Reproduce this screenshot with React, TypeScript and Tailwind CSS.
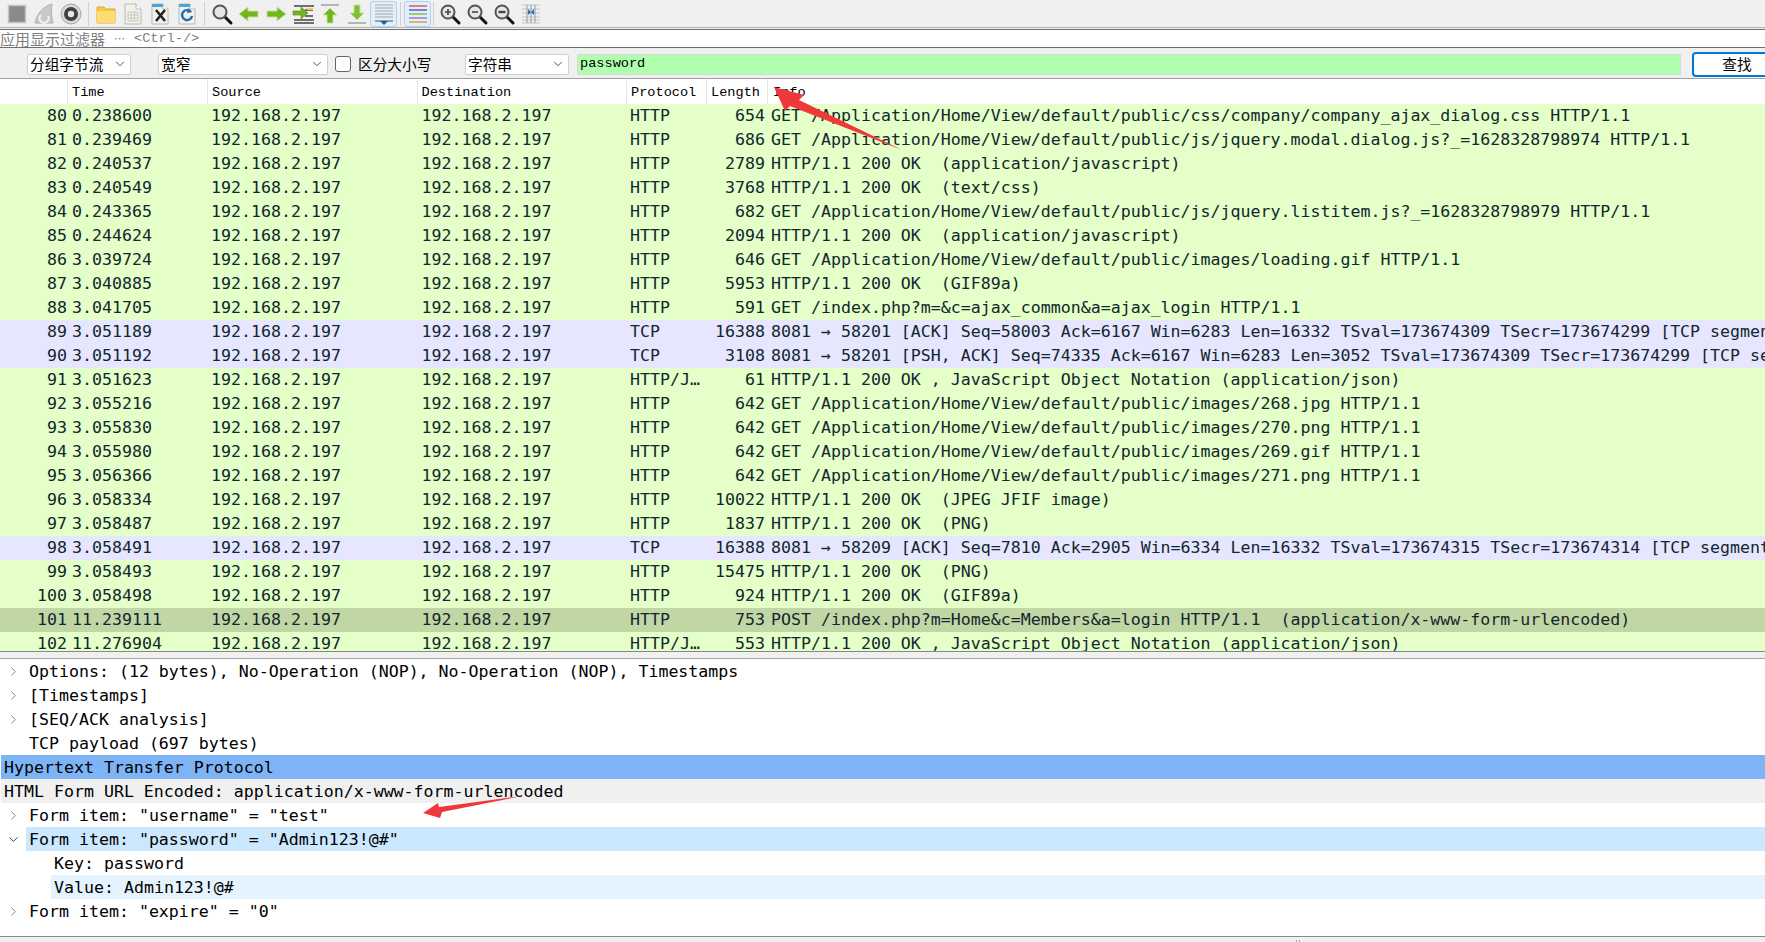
import React from "react";
import { ChevronDown, ChevronRight } from "lucide-react";

const HOME = "/Application/Home/View/default/public";

// no, time, protocol, length, info, colour
const packets: [number, string, string, string, string, string][] = [
  [80, "0.238600", "HTTP", "654", `GET ${HOME}/css/company/company_ajax_dialog.css HTTP/1.1`, "http"],
  [81, "0.239469", "HTTP", "686", `GET ${HOME}/js/jquery.modal.dialog.js?_=1628328798974 HTTP/1.1`, "http"],
  [82, "0.240537", "HTTP", "2789", "HTTP/1.1 200 OK  (application/javascript)", "http"],
  [83, "0.240549", "HTTP", "3768", "HTTP/1.1 200 OK  (text/css)", "http"],
  [84, "0.243365", "HTTP", "682", `GET ${HOME}/js/jquery.listitem.js?_=1628328798979 HTTP/1.1`, "http"],
  [85, "0.244624", "HTTP", "2094", "HTTP/1.1 200 OK  (application/javascript)", "http"],
  [86, "3.039724", "HTTP", "646", `GET ${HOME}/images/loading.gif HTTP/1.1`, "http"],
  [87, "3.040885", "HTTP", "5953", "HTTP/1.1 200 OK  (GIF89a)", "http"],
  [88, "3.041705", "HTTP", "591", "GET /index.php?m=&c=ajax_common&a=ajax_login HTTP/1.1", "http"],
  [89, "3.051189", "TCP", "16388", "8081 → 58201 [ACK] Seq=58003 Ack=6167 Win=6283 Len=16332 TSval=173674309 TSecr=173674299 [TCP segment of a reassembled PDU]", "tcp"],
  [90, "3.051192", "TCP", "3108", "8081 → 58201 [PSH, ACK] Seq=74335 Ack=6167 Win=6283 Len=3052 TSval=173674309 TSecr=173674299 [TCP segment of a reassembled PDU]", "tcp"],
  [91, "3.051623", "HTTP/J…", "61", "HTTP/1.1 200 OK , JavaScript Object Notation (application/json)", "http"],
  [92, "3.055216", "HTTP", "642", `GET ${HOME}/images/268.jpg HTTP/1.1`, "http"],
  [93, "3.055830", "HTTP", "642", `GET ${HOME}/images/270.png HTTP/1.1`, "http"],
  [94, "3.055980", "HTTP", "642", `GET ${HOME}/images/269.gif HTTP/1.1`, "http"],
  [95, "3.056366", "HTTP", "642", `GET ${HOME}/images/271.png HTTP/1.1`, "http"],
  [96, "3.058334", "HTTP", "10022", "HTTP/1.1 200 OK  (JPEG JFIF image)", "http"],
  [97, "3.058487", "HTTP", "1837", "HTTP/1.1 200 OK  (PNG)", "http"],
  [98, "3.058491", "TCP", "16388", "8081 → 58209 [ACK] Seq=7810 Ack=2905 Win=6334 Len=16332 TSval=173674315 TSecr=173674314 [TCP segment of a reassembled PDU]", "tcp"],
  [99, "3.058493", "HTTP", "15475", "HTTP/1.1 200 OK  (PNG)", "http"],
  [100, "3.058498", "HTTP", "924", "HTTP/1.1 200 OK  (GIF89a)", "http"],
  [101, "11.239111", "HTTP", "753", "POST /index.php?m=Home&c=Members&a=login HTTP/1.1  (application/x-www-form-urlencoded)", "sel"],
  [102, "11.276904", "HTTP/J…", "553", "HTTP/1.1 200 OK , JavaScript Object Notation (application/json)", "http"],
];

const mono = "font-['DejaVu_Sans_Mono',monospace]";
const small = "font-['Liberation_Mono',monospace]";
const cjk = "font-['Noto_Sans_CJK_SC','Noto_Sans',sans-serif]";

function Slot({ children, on }: { children: React.ReactNode; on?: boolean }) {
  return (
    <div
      className={`w-[27px] h-[26px] flex items-center justify-center shrink-0 rounded-[3px] ${
        on ? "bg-[#e2eefa] border border-[#a8d4f8]" : ""
      }`}
    >
      <svg width="24" height="24" viewBox="0 0 24 24">
        {children}
      </svg>
    </div>
  );
}

function Sep({ w = "w-[8px]" }: { w?: string }) {
  return (
    <div className={`${w} h-[24px] flex justify-center shrink-0`}>
      <div className="w-px h-full bg-[#d0d0d0]" />
    </div>
  );
}

function Page({ children }: { children?: React.ReactNode }) {
  return (
    <>
      <path d="M4 2h11l5 5v15H4z" fill="#f4f1e6" stroke="#b8b8b8" />
      <path d="M15 2v5h5" fill="#fff" stroke="#b8b8b8" />
      {children}
    </>
  );
}

function Lens({ children }: { children?: React.ReactNode }) {
  return (
    <>
      <path d="M15 15l6 6" stroke="#111" strokeWidth="3" strokeLinecap="round" />
      <circle cx="10" cy="10" r="6.5" fill="#e6e6e6" stroke="#555" strokeWidth="2" />
      {children}
    </>
  );
}

function Toolbar() {
  return (
    <div className="h-[27px] pl-[3px] flex items-center bg-[#f0f0f0] border-b border-[#b4b4b4] box-content">
      <Slot>
        <rect x="3.5" y="3.5" width="17" height="17" fill="#8a8a8a" stroke="#c4c4c4" strokeWidth="1.5" />
      </Slot>
      <Slot>
        <path d="M3 21C5 12 10 5 20 2c-1 6-1 13 1 19z" fill="#c8c8c8" stroke="#b0b0b0" />
        <path d="M9 13a4.5 4.5 0 1 0 7 1" fill="none" stroke="#f4f4f4" strokeWidth="2" />
      </Slot>
      <Slot>
        <circle cx="12" cy="12" r="10" fill="#d8d8d8" stroke="#a8a8a8" />
        <circle cx="12" cy="12" r="7" fill="#404040" />
        <circle cx="12" cy="12" r="3.2" fill="#e6e6e6" />
      </Slot>
      <Sep />
      <Slot>
        <path d="M3 5h7l2 2h9v14H3z" fill="#fbc73d" stroke="#e0a92a" />
        <path d="M3 9h18v12H3z" fill="#fddc74" />
      </Slot>
      <Slot>
        <Page>
          <path d="M7 10h10v9H7zM10.3 10v9M13.6 10v9M7 13h10M7 16h10" fill="none" stroke="#c8c8c8" />
        </Page>
      </Slot>
      <Slot>
        <Page>
          <path d="M4 2h11v3H4z" fill="#4da3dc" />
          <path d="M8 8l9 11M17 8L8 19" stroke="#222" strokeWidth="2.6" />
        </Page>
      </Slot>
      <Slot>
        <Page>
          <path d="M4 2h11v3H4z" fill="#4da3dc" />
          <path d="M16 10a5 5 0 1 0 1 4" fill="none" stroke="#1d6fb8" strokeWidth="2.4" />
          <path d="M13 6l4 4-5 1z" fill="#1d6fb8" />
        </Page>
      </Slot>
      <Sep />
      <Slot>
        <Lens />
      </Slot>
      <Slot>
        <path d="M2 12l9-7v4h10v6H11v4z" fill="#72b51d" stroke="#c6e0a0" />
      </Slot>
      <Slot>
        <path d="M22 12l-9-7v4H3v6h10v4z" fill="#72b51d" stroke="#c6e0a0" />
      </Slot>
      <Slot>
        <path d="M3 4h20M14 8h8M3 18h20M3 21h20M14 14h8" stroke="#444" strokeWidth="1.3" />
        <path d="M16 6h6v2h-6z" fill="#f0d040" />
        <path d="M2 9h8V5l7 6-7 6v-4H2z" fill="#72b51d" stroke="#4c8a10" strokeWidth=".6" />
      </Slot>
      <Slot>
        <path d="M3 3h18" stroke="#a0a0a0" strokeWidth="1.5" />
        <path d="M12 6l7 7h-4v8H9v-8H5z" fill="#72b51d" stroke="#c6e0a0" />
      </Slot>
      <Slot>
        <path d="M3 21h18" stroke="#a0a0a0" strokeWidth="1.5" />
        <path d="M12 18l7-7h-4V3H9v8H5z" fill="#82bf30" stroke="#c6e0a0" />
      </Slot>
      <Slot on>
        <path d="M3 3h18M3 6h18M3 9h18M3 12h18M3 15h18" stroke="#a8a8a8" strokeWidth="1" />
        <path d="M3 19h18" stroke="#555" strokeWidth="1" />
        <path d="M8 19h8l-4 4z" fill="#1d5fa8" />
      </Slot>
      <Sep w="w-[7px]" />
      <Slot on>
        <path d="M3 4h18" stroke="#e05050" strokeWidth="1.4" />
        <path d="M3 8h18" stroke="#5050d0" strokeWidth="1.4" />
        <path d="M3 12h18" stroke="#80b840" strokeWidth="1.4" />
        <path d="M3 16h18" stroke="#a070c0" strokeWidth="1.4" />
        <path d="M3 20h18" stroke="#d0a030" strokeWidth="1.4" />
      </Slot>
      <Sep w="w-[5px]" />
      <Slot>
        <Lens>
          <path d="M7 10h6M10 7v6" stroke="#444" strokeWidth="1.6" />
        </Lens>
      </Slot>
      <Slot>
        <Lens>
          <path d="M7 10h6" stroke="#444" strokeWidth="1.6" />
        </Lens>
      </Slot>
      <Slot>
        <Lens>
          <path d="M6.5 10h7" stroke="#444" strokeWidth="2.4" />
        </Lens>
      </Slot>
      <Slot>
        <path d="M3 3h18M3 21h18M3 7h18M3 11h18M3 15h18M3 18h18" stroke="#c4c4c4" />
        <path d="M8 3v18M16 3v18M12 3v18" stroke="#9a9a9a" />
        <path d="M9 7l3 3-3 3zM15 7l-3 3 3 3z" fill="#1d6fb8" />
      </Slot>
    </div>
  );
}

function FilterBar() {
  return (
    <div className={`mt-[1px] h-[17px] bg-white border-y border-[#6e6e6e] flex items-center box-content text-[#808080] ${cjk}`}>
      <span className="text-[15px] leading-none">应用显示过滤器</span>
      <span className="ml-[9px] text-[11px] leading-none">…</span>
      <span className={`ml-[9px] text-[13.6px] leading-none ${small}`}>{"<Ctrl-/>"}</span>
    </div>
  );
}

function Select({ label, className }: { label: string; className: string }) {
  return (
    <div className={`h-[21px] bg-white border border-[#d0d0d0] rounded-[2px] flex items-center justify-between pl-[2px] pr-[3px] shrink-0 ${className}`}>
      <span className={`text-[14.67px] leading-none text-black ${cjk}`}>{label}</span>
      <ChevronDown size={14} strokeWidth={1.4} className="text-[#333]" />
    </div>
  );
}

function FindBar() {
  return (
    <div className="h-[28px] pt-[2px] pl-[27px] bg-[#f0f0f0] border-b border-[#a0a0a0] flex items-center overflow-hidden box-content">
      <Select label="分组字节流" className="w-[104px]" />
      <Select label="宽窄" className="ml-[27px] w-[170px]" />
      <div className="ml-[7px] w-[16px] h-[16px] bg-white border border-[#666] rounded-[3px] shrink-0" />
      <span className={`ml-[7px] w-[107px] text-[14.67px] leading-none text-black shrink-0 ${cjk}`}>区分大小写</span>
      <Select label="字符串" className="w-[104px]" />
      <div className="ml-[8px] w-[1104px] h-[21px] bg-[#afffaf] border border-[#d8d8d8] flex items-center pl-[2px] shrink-0">
        <span className={`text-[13.6px] leading-none text-black ${small}`}>password</span>
      </div>
      <div className="ml-[11px] w-[90px] h-[25px] bg-white border-2 border-[#0078d7] rounded-[4px] flex items-center justify-center shrink-0">
        <span className={`text-[14.67px] leading-none text-black ${cjk}`}>查找</span>
      </div>
    </div>
  );
}

const cols = "grid grid-cols-[68px_140px_209.5px_209.5px_80px_61px_1fr]";

function HeaderCell({ label, className = "" }: { label: string; className?: string }) {
  return (
    <div className={`h-full border-r border-[#e5e5e5] flex items-center pt-[4px] pl-[4px] text-[13.6px] text-black ${small} ${className}`}>
      {label}
    </div>
  );
}

function PacketList() {
  return (
    <div className="h-[572px] overflow-hidden border-b border-[#888] box-content">
      <div className={`h-[25px] bg-white ${cols}`}>
        <HeaderCell label="" />
        <HeaderCell label="Time" />
        <HeaderCell label="Source" />
        <HeaderCell label="Destination" />
        <HeaderCell label="Protocol" />
        <HeaderCell label="Length" />
        <div className={`h-full flex items-center pt-[4px] pl-[5px] text-[13.6px] text-black ${small}`}>Info</div>
      </div>
      {packets.map(([no, time, proto, len, info, kind]) => (
        <div
          key={no}
          className={`h-[24px] ${cols} items-center whitespace-pre text-[16.6px] leading-[24px] text-[#12272e] ${mono} ${
            kind === "tcp" ? "bg-[#e7e6ff]" : kind === "sel" ? "bg-[#c1d6a5]" : "bg-[#e4ffc7]"
          }`}
        >
          <div className="text-right pr-[1px]">{no}</div>
          <div className="pl-[4px]">{time}</div>
          <div className="pl-[3px]">192.168.2.197</div>
          <div className="pl-[4px]">192.168.2.197</div>
          <div className="pl-[3px]">{proto}</div>
          <div className="text-right pr-[3px]">{len}</div>
          <div className="pl-[3px] overflow-hidden">{info}</div>
        </div>
      ))}
    </div>
  );
}

function Tree({ text, open, leaf }: { text: string; open?: boolean; leaf?: boolean }) {
  return (
    <div className={`h-[24px] flex items-center whitespace-pre text-[16.6px] ${mono} text-black`}>
      <div className="w-[26px] h-full pl-[6px] flex items-center shrink-0">
        {leaf ? null : open ? (
          <ChevronDown size={15} strokeWidth={1.5} className="text-[#333]" />
        ) : (
          <ChevronRight size={15} strokeWidth={1.5} className="text-[#808080]" />
        )}
      </div>
      <div className={`flex-1 h-full pt-[2px] pl-[3px] flex items-center ${open ? "bg-[#cce8ff]" : ""}`}>{text}</div>
    </div>
  );
}

function Details() {
  return (
    <div className="mt-[6px] h-[277px] bg-white border-t border-[#a0a0a0] border-b border-b-[#888] overflow-hidden box-content">
      <Tree text="Options: (12 bytes), No-Operation (NOP), No-Operation (NOP), Timestamps" />
      <Tree text="[Timestamps]" />
      <Tree text="[SEQ/ACK analysis]" />
      <Tree text="TCP payload (697 bytes)" leaf />
      <div className={`ml-[1px] h-[24px] pt-[2px] pl-[3px] flex items-center bg-[#7eb4f5] text-[16.6px] text-black ${mono}`}>
        Hypertext Transfer Protocol
      </div>
      <div className={`ml-[1px] h-[24px] pt-[2px] pl-[3px] flex items-center bg-[#f0f0f0] text-[16.6px] text-black ${mono}`}>
        HTML Form URL Encoded: application/x-www-form-urlencoded
      </div>
      <Tree text={'Form item: "username" = "test"'} />
      <Tree text={'Form item: "password" = "Admin123!@#"'} open />
      <div className={`ml-[54px] h-[24px] pt-[2px] flex items-center text-[16.6px] text-black ${mono}`}>Key: password</div>
      <div className={`ml-[51px] h-[24px] pt-[2px] pl-[3px] flex items-center bg-[#e5f3ff] text-[16.6px] text-black ${mono}`}>
        Value: Admin123!@#
      </div>
      <Tree text={'Form item: "expire" = "0"'} />
    </div>
  );
}

export default function App() {
  return (
    <div className="relative w-[1765px] h-[942px] overflow-hidden bg-[#f0f0f0]">
      <Toolbar />
      <FilterBar />
      <FindBar />
      <PacketList />
      <Details />
      <div className="h-[5px] bg-[#f0f0f0] pl-[1296px] pt-[3px]">
        <div className="w-[4px] h-[2px] border-x border-[#a0a0a0]" />
      </div>
      {/* red arrows drawn on top of the screenshot */}
      <svg className="absolute inset-0 pointer-events-none" width="1765" height="942">
        <polygon points="774,87 804,95 799,100 902,150 790,106 785,111" fill="#f0373a" />
        <polygon points="423,813 438,803 439,807 522,796 442,812 440,818" fill="#f0373a" />
      </svg>
    </div>
  );
}
